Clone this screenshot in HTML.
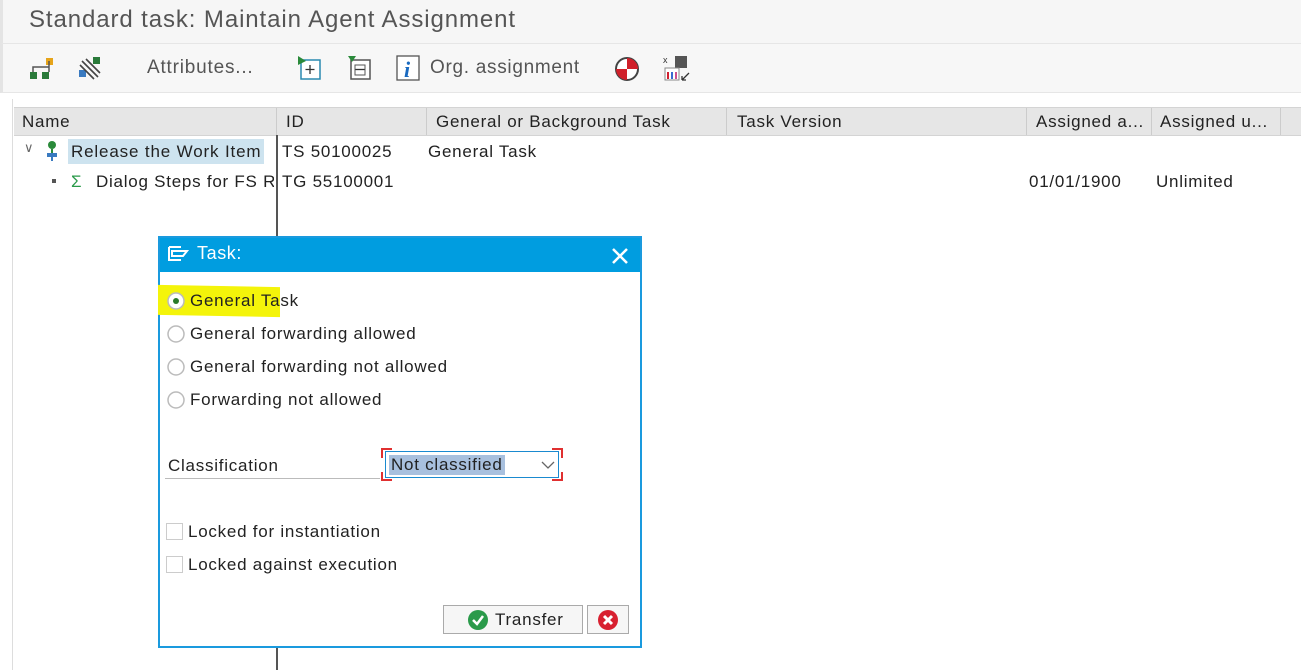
<!DOCTYPE html>
<html><head><meta charset="utf-8"><style>
body{margin:0;width:1301px;height:670px;overflow:hidden;background:#fff;font-family:"Liberation Sans","DejaVu Sans",sans-serif;position:relative;color:#222}
.a{position:absolute;white-space:nowrap}
.t{font-size:17px;letter-spacing:0.75px}
</style></head><body>
<div class="a" style="left:0;top:0;width:1301px;height:43px;background:#f6f6f6;border-left:3px solid #e4e4e4"></div>
<div class="a" style="left:29px;top:6px;font-size:24px;color:#555;letter-spacing:0.9px">Standard task: Maintain Agent Assignment</div>
<div class="a" style="left:0;top:43px;width:1301px;height:48px;background:#f7f7f7;border-top:1px solid #e6e6e6;border-bottom:1px solid #e6e6e6;border-left:3px solid #e4e4e4"></div>
<svg class="a" style="left:28px;top:55px" width="30" height="26"><rect x="2" y="17" width="7" height="7" fill="#2a7a3a"/><rect x="14" y="17" width="7" height="7" fill="#2a7a3a"/><rect x="18" y="3" width="7" height="7" fill="#e6a41a"/><path d="M5 17V12H21V6M21 12V17" stroke="#555" fill="none" stroke-width="1.5"/></svg>
<svg class="a" style="left:76px;top:55px" width="30" height="26"><rect x="17" y="2" width="7" height="7" fill="#2a7a3a"/><rect x="3" y="15" width="7" height="7" fill="#3a7ac0"/><path d="M6 6L22 22M10 4L24 18M4 10L18 24" stroke="#444" stroke-width="1.6"/></svg>
<div class="a" style="left:147px;top:57px;color:#555;font-size:19px;letter-spacing:0.8px">Attributes...</div>
<svg class="a" style="left:296px;top:54px" width="28" height="28"><rect x="5" y="6" width="19" height="19" fill="#fff" stroke="#2a8ab0" stroke-width="1.5"/><path d="M2 2L10 7L2 11Z" fill="#2a8a3a"/><path d="M14 11V20M9.5 15.5H18.5" stroke="#333" stroke-width="1.3"/></svg>
<svg class="a" style="left:346px;top:54px" width="28" height="28"><rect x="5" y="6" width="19" height="19" fill="#fff" stroke="#555" stroke-width="1.5"/><path d="M2 2L10 2L6 8Z" fill="#2a8a3a"/><path d="M9.5 15.5H18.5" stroke="#333" stroke-width="1.3"/><rect x="9" y="11" width="10" height="10" fill="none" stroke="#555"/></svg>
<svg class="a" style="left:395px;top:54px" width="28" height="28"><rect x="2" y="2" width="22" height="24" fill="#fff" stroke="#555" stroke-width="1.3"/><text x="9" y="23" font-family="Liberation Serif" font-style="italic" font-weight="bold" font-size="22" fill="#1a6ac0">i</text></svg>
<div class="a" style="left:430px;top:57px;color:#555;font-size:19px;letter-spacing:0.7px">Org. assignment</div>
<svg class="a" style="left:613px;top:55px" width="28" height="28"><circle cx="14" cy="14" r="11" fill="#fff" stroke="#444" stroke-width="2"/><path d="M14 3A11 11 0 0 1 25 14H14Z" fill="#d0202a"/><path d="M14 14H3A11 11 0 0 0 14 25Z" fill="#d0202a"/></svg>
<svg class="a" style="left:662px;top:54px" width="30" height="30"><text x="1" y="9" font-size="9" fill="#333">x</text><rect x="13" y="2" width="12" height="12" fill="#555"/><rect x="3" y="14" width="14" height="12" fill="#fff" stroke="#888"/><rect x="5" y="18" width="2" height="7" fill="#d02030"/><rect x="9" y="18" width="2" height="7" fill="#3a6ad0"/><rect x="13" y="18" width="2" height="7" fill="#d05090"/><path d="M20 26L27 19M20 26H24M20 26V22" stroke="#333" stroke-width="1.3" fill="none"/></svg>
<div class="a" style="left:12px;top:99px;width:1px;height:571px;background:#ddd"></div>
<div class="a" style="left:14px;top:107px;width:1287px;height:27px;background:#e6e6e6;border-top:1px solid #d4d4d4;border-bottom:1px solid #d4d4d4"></div>
<div class="a" style="left:276px;top:108px;width:1px;height:27px;background:#ccc"></div>
<div class="a" style="left:426px;top:108px;width:1px;height:27px;background:#ccc"></div>
<div class="a" style="left:726px;top:108px;width:1px;height:27px;background:#ccc"></div>
<div class="a" style="left:1026px;top:108px;width:1px;height:27px;background:#ccc"></div>
<div class="a" style="left:1151px;top:108px;width:1px;height:27px;background:#ccc"></div>
<div class="a" style="left:1280px;top:108px;width:1px;height:27px;background:#ccc"></div>
<div class="a t" style="left:22px;top:112px">Name</div>
<div class="a t" style="left:286px;top:112px">ID</div>
<div class="a t" style="left:436px;top:112px">General or Background Task</div>
<div class="a t" style="left:737px;top:112px">Task Version</div>
<div class="a t" style="left:1036px;top:112px">Assigned a...</div>
<div class="a t" style="left:1160px;top:112px">Assigned u...</div>
<div class="a" style="left:276px;top:135px;width:2px;height:535px;background:#555"></div>
<div class="a" style="left:24px;top:140px;font-size:13px;color:#666">&#8744;</div>
<svg class="a" style="left:44px;top:140px" width="16" height="22"><circle cx="8" cy="5" r="4" fill="#2a8a3a"/><rect x="7" y="9" width="2" height="5" fill="#2a8a3a"/><rect x="3" y="13" width="10" height="4" fill="#3a7ac0"/><rect x="7" y="17" width="2" height="4" fill="#3a7ac0"/></svg>
<div class="a" style="left:68px;top:139px;width:196px;height:25px;background:#cde3ef"></div>
<div class="a t" style="left:71px;top:142px;letter-spacing:0.85px">Release the Work Item</div>
<div class="a" style="left:52px;top:179px;width:4px;height:4px;background:#555"></div>
<div class="a t" style="left:71px;top:172px;color:#2a9a4a">&Sigma;</div>
<div class="a t" style="left:96px;top:172px;width:178px;overflow:hidden">Dialog Steps for FS Release</div>
<div class="a t" style="left:282px;top:142px">TS 50100025</div>
<div class="a t" style="left:428px;top:142px">General Task</div>
<div class="a t" style="left:282px;top:172px">TG 55100001</div>
<div class="a t" style="left:1029px;top:172px">01/01/1900</div>
<div class="a t" style="left:1156px;top:172px">Unlimited</div>
<div class="a" style="left:158px;top:236px;width:480px;height:408px;background:#fff;border:2px solid #1a9ade"></div>
<div class="a" style="left:160px;top:238px;width:480px;height:34px;background:#009de0"></div>
<svg class="a" style="left:167px;top:245px" width="24" height="18"><path d="M2 2H14M2 2V15H14M5 6H20L16 11H5Z" stroke="#fff" stroke-width="2" fill="none"/></svg>
<div class="a" style="left:197px;top:243px;color:#fff;font-size:18px;letter-spacing:0.6px">Task:</div>
<svg class="a" style="left:611px;top:247px" width="18" height="18"><path d="M2 2L16 16M16 2L2 16" stroke="#fff" stroke-width="2.5"/></svg>
<div class="a" style="left:158px;top:286px;width:122px;height:30px;background:#f4f40a;transform:skewY(1deg)"></div>
<svg class="a" style="left:167px;top:292px" width="18" height="18"><circle cx="9" cy="9" r="8" fill="#fff" stroke="#bbb" stroke-width="1.5"/><circle cx="9" cy="9" r="3" fill="#2a7a2a"/></svg>
<div class="a t" style="left:190px;top:291px">General Task</div>
<svg class="a" style="left:167px;top:325px" width="18" height="18"><circle cx="9" cy="9" r="8" fill="#fff" stroke="#bbb" stroke-width="1.5"/></svg>
<div class="a t" style="left:190px;top:324px">General forwarding allowed</div>
<svg class="a" style="left:167px;top:358px" width="18" height="18"><circle cx="9" cy="9" r="8" fill="#fff" stroke="#bbb" stroke-width="1.5"/></svg>
<div class="a t" style="left:190px;top:357px">General forwarding not allowed</div>
<svg class="a" style="left:167px;top:391px" width="18" height="18"><circle cx="9" cy="9" r="8" fill="#fff" stroke="#bbb" stroke-width="1.5"/></svg>
<div class="a t" style="left:190px;top:390px">Forwarding not allowed</div>
<div class="a t" style="left:168px;top:456px">Classification</div>
<div class="a" style="left:165px;top:478px;width:215px;height:1px;background:#bbb"></div>
<div class="a" style="left:381px;top:448px;width:182px;height:33px;border:2px solid #e03030;box-sizing:border-box"></div>
<div class="a" style="left:392px;top:445px;width:160px;height:39px;background:#fff"></div>
<div class="a" style="left:378px;top:458px;width:190px;height:14px;background:#fff"></div>
<div class="a" style="left:385px;top:451px;width:174px;height:27px;border:1.5px solid #1a8ad0;box-sizing:border-box;background:#fff"></div>
<div class="a" style="left:389px;top:455px;width:116px;height:20px;background:#a8c0de"></div>
<div class="a t" style="left:391px;top:455px">Not classified</div>
<svg class="a" style="left:541px;top:460px" width="14" height="10"><path d="M1 2L7 8L13 2" stroke="#666" stroke-width="1.3" fill="none"/></svg>
<div class="a" style="left:166px;top:523px;width:17px;height:17px;border:1.5px solid #ccc;box-sizing:border-box"></div>
<div class="a t" style="left:188px;top:522px">Locked for instantiation</div>
<div class="a" style="left:166px;top:556px;width:17px;height:17px;border:1.5px solid #ccc;box-sizing:border-box"></div>
<div class="a t" style="left:188px;top:555px">Locked against execution</div>
<div class="a" style="left:443px;top:605px;width:140px;height:29px;border:1px solid #aaa;background:#f6f6f6;box-sizing:border-box"></div>
<svg class="a" style="left:467px;top:609px" width="22" height="22"><circle cx="11" cy="11" r="10" fill="#2a9a4a"/><path d="M6 11L10 15L16 7" stroke="#fff" stroke-width="2.5" fill="none"/></svg>
<div class="a t" style="left:495px;top:610px">Transfer</div>
<div class="a" style="left:587px;top:605px;width:42px;height:29px;border:1px solid #aaa;background:#f6f6f6;box-sizing:border-box"></div>
<svg class="a" style="left:597px;top:609px" width="22" height="22"><circle cx="11" cy="11" r="10" fill="#d82030"/><path d="M7 7L15 15M15 7L7 15" stroke="#fff" stroke-width="3"/></svg>
</body></html>
